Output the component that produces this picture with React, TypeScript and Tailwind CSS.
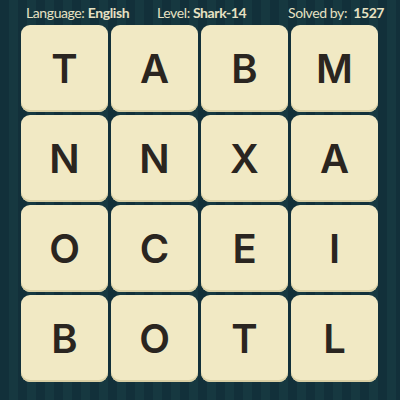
const LETTERS = [
  'T', 'A', 'B', 'M',
  'N', 'N', 'X', 'A',
  'O', 'C', 'E', 'I',
  'B', 'O', 'T', 'L',
];

export default function App() {
  return (
    <div
      className="w-[400px] h-[400px] overflow-hidden bg-[#133139] bg-[repeating-linear-gradient(90deg,#12303a_0px,#12303a_9px,#163840_9px,#163840_18px)]"
      style={{ fontFamily: 'Lato, "Noto Sans", sans-serif' }}
    >
      {/* Header */}
      <div className="h-[25px] grid grid-cols-[131px_131px_auto] items-center pl-[26px] text-[14px] tracking-[-0.4px] leading-none text-[#e6e1c3] pt-[1px]">
        <span>Language: <b className="font-bold">English</b></span>
        <span>Level: <b className="font-bold">Shark-14</b></span>
        <span>Solved by: <b className="font-bold ml-[3px]">1527</b></span>
      </div>

      {/* Board */}
      <div className="ml-[21px] grid grid-cols-4 gap-[3px] w-[357px]">
        {LETTERS.map((letter, i) => (
          <div
            key={i}
            className="h-[87px] rounded-[9px] bg-[#f1e9c4] shadow-[inset_0_-2px_0_#d9cfa4] flex items-center justify-center text-[40px] font-semibold text-[#2a2520] leading-none font-[Inter,sans-serif]"
          >
            {letter}
          </div>
        ))}
      </div>
    </div>
  );
}
